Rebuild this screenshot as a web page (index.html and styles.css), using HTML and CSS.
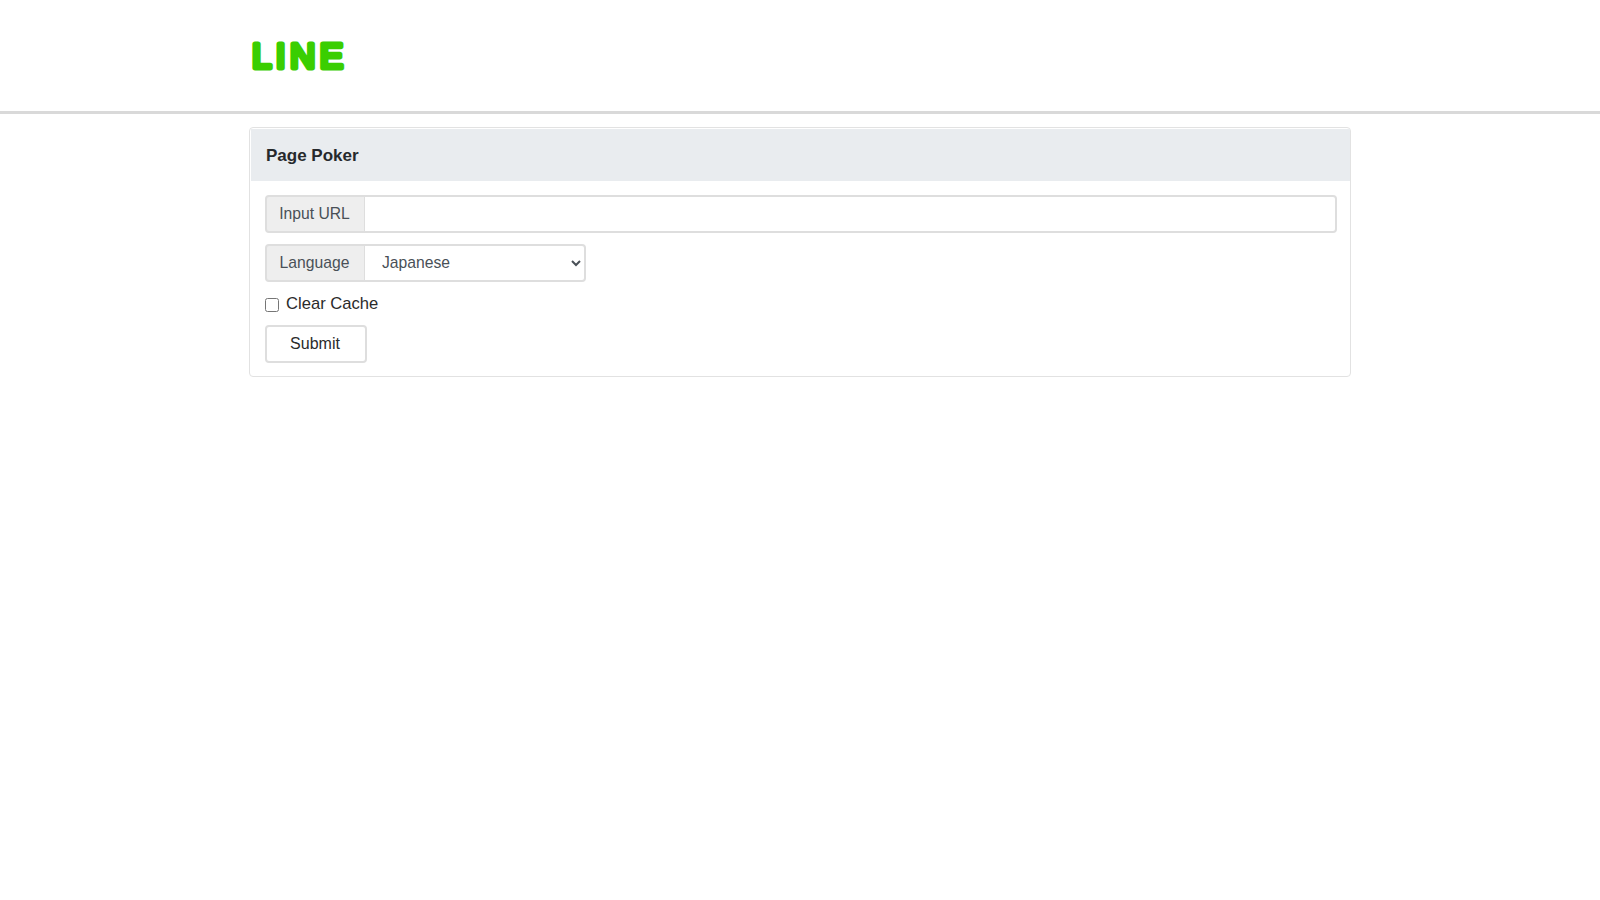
FILE: index.html
```html
<!DOCTYPE html>
<html lang="en">
<head>
<meta charset="utf-8">
<title>Page Poker</title>
<link rel="stylesheet" href="styles.css">
</head>
<body>
<header class="site-header">
  <div class="container">
    <svg class="logo" width="104" height="38" viewBox="0 0 104 38" aria-label="LINE">
      <text class="logo-text" x="2" y="30" textLength="91">LINE</text>
    </svg>
  </div>
</header>
<main class="container">
  <section class="card">
    <h1 class="card-header">Page Poker</h1>
    <form class="card-body">
      <div class="input-group">
        <label class="addon" for="url">Input URL</label>
        <input class="control" id="url" type="text">
      </div>
      <div class="input-group select-group">
        <label class="addon" for="lang">Language</label>
        <select class="control select" id="lang">
          <option>Japanese</option>
          <option>English</option>
        </select>
      </div>
      <div class="check-row">
        <input class="check" id="cache" type="checkbox">
        <label for="cache">Clear Cache</label>
      </div>
      <button class="submit" type="button">Submit</button>
    </form>
  </section>
</main>
</body>
</html>
```
FILE: styles.css
```css
* { box-sizing: border-box; }
html, body { margin: 0; padding: 0; }
body {
  background: #fff;
  color: #212529;
  font-family: "Liberation Sans", Arial, sans-serif;
  font-size: 16px;
  line-height: 1.5;
}
.container { width: 1102px; margin: 0 0 0 249px; }
.site-header {
  height: 114px;
  border-bottom: 3px solid #d9d9d9;
  padding-top: 38px;
}
.logo {
  display: block;
  margin-left: 1px;
  overflow: visible;
}
.logo-text {
  fill: #3ace01;
  stroke: #3ace01;
  stroke-width: 5px;
  stroke-linejoin: round;
  font-family: "Liberation Sans", Arial, sans-serif;
  font-size: 35px;
  font-weight: 400;
}
.card {
  margin-top: 13px;
  height: 250px;
  border: 1px solid #e2e2e2;
  border-radius: 4px;
  padding: 1px 0 1px 1px;
}
.card-header {
  margin: 0;
  height: 52px;
  padding: 0 15px;
  background: #e9ecef;
  color: #26292c;
  font-size: 17px;
  font-weight: 700;
  line-height: 54px;
}
.card-body {
  padding: 14px 13px 0 14px;
}
.input-group {
  display: flex;
  height: 38px;
  margin-bottom: 11px;
}
.addon {
  flex: none;
  width: 100px;
  height: 38px;
  border: 2px solid #dedede;
  border-right-width: 1px;
  border-radius: 4px 0 0 4px;
  padding-right: 2px;
  background: #eeeeee;
  color: #495057;
  font-size: 15.7px;
  line-height: 34px;
  text-align: center;
}
.control {
  flex: 1;
  min-width: 0;
  height: 38px;
  margin: 0;
  border: 2px solid #dedede;
  border-left: 0;
  border-radius: 0 4px 4px 0;
  background: #fff;
  color: #495057;
  font: 15.7px "Liberation Sans", Arial, sans-serif;
  padding: 0 16px;
}
.select-group { width: 321px; }
.select { padding: 0 13px 2px; }
.check-row {
  display: flex;
  align-items: center;
  height: 24px;
  margin-bottom: 9px;
  margin-top: -1px;
  font-size: 16.6px;
  color: #2b2b2b;
}
.check {
  width: 14px;
  height: 14px;
  margin: 2px 7px 0 0;
}
.submit {
  display: block;
  width: 102px;
  height: 38px;
  border: 2px solid #dedede;
  border-radius: 4px;
  background: #fff;
  color: #2b2b2b;
  font: 16px "Liberation Sans", Arial, sans-serif;
  padding: 0 2px 0 0;
}
```
